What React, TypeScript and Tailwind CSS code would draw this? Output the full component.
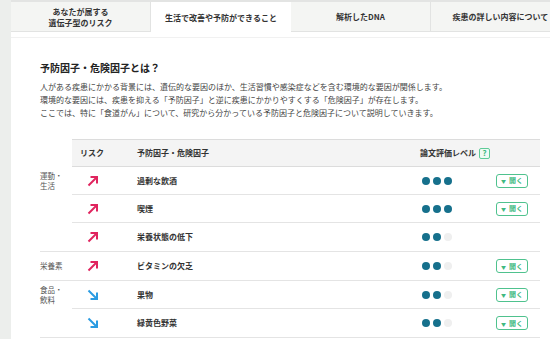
import React from 'react';

type Row = { risk: 'up' | 'down'; name: string; level: number; open: boolean };
type Group = { label: string[]; rows: Row[] };

const tabs = [
  { label: ['あなたが属する', '遺伝子型のリスク'], active: false },
  { label: ['生活で改善や予防ができること'], active: true },
  { label: ['解析したDNA'], active: false },
  { label: ['疾患の詳しい内容について'], active: false },
];

const groups: Group[] = [
  {
    label: ['運動・', '生活'],
    rows: [
      { risk: 'up', name: '過剰な飲酒', level: 3, open: true },
      { risk: 'up', name: '喫煙', level: 3, open: true },
      { risk: 'up', name: '栄養状態の低下', level: 2, open: false },
    ],
  },
  { label: ['栄養素'], rows: [{ risk: 'up', name: 'ビタミンの欠乏', level: 2, open: true }] },
  {
    label: ['食品・', '飲料'],
    rows: [
      { risk: 'down', name: '果物', level: 2, open: true },
      { risk: 'down', name: '緑黄色野菜', level: 2, open: true },
    ],
  },
];

const RiskArrow = ({ dir }: { dir: 'up' | 'down' }) =>
  dir === 'up' ? (
    <svg width="12" height="12" viewBox="0 0 12 12">
      <path d="M1.5 10.5 L10 2" stroke="#e0245e" strokeWidth="2" fill="none" />
      <path d="M3.5 2 H10 V8.5" stroke="#e0245e" strokeWidth="2" fill="none" />
    </svg>
  ) : (
    <svg width="12" height="12" viewBox="0 0 12 12">
      <path d="M1.5 1.5 L10 10" stroke="#2a9be2" strokeWidth="2" fill="none" />
      <path d="M10 3.5 V10 H3.5" stroke="#2a9be2" strokeWidth="2" fill="none" />
    </svg>
  );

const Dots = ({ level }: { level: number }) => (
  <div className="flex gap-[3px]">
    {[0, 1, 2].map((i) => (
      <span
        key={i}
        className={`w-[8px] h-[8px] rounded-full ${i < level ? 'bg-[#16708c]' : 'bg-[#efefef]'}`}
      ></span>
    ))}
  </div>
);

const FactorRow = ({ row, last }: { row: Row; last: boolean }) => (
  <div className={`flex items-center h-[28px] ${last ? '' : 'border-b border-[#e4e4e4]'}`}>
    <div className="w-[65px] pl-[15px] flex items-center">
      <RiskArrow dir={row.risk} />
    </div>
    <div className="flex-1 text-[8px] font-bold text-[#333]">{row.name}</div>
    <div className="w-[76px] pl-[2px]">
      <Dots level={row.level} />
    </div>
    <div className="w-[44px]">
      {row.open && (
        <button className="w-[32px] h-[14px] border border-[#4fc28e] rounded-[3px] flex items-center justify-center gap-[3px] text-[#3fb981] bg-white">
          <span className="text-[5px] leading-none">▼</span>
          <span className="text-[7px] font-bold leading-none">開く</span>
        </button>
      )}
    </div>
  </div>
);

export default function App() {
  return (
    <div
      className="w-[550px] h-[339px] overflow-hidden flex bg-white"
      style={{ fontFamily: '"Noto Sans CJK JP", "Noto Sans", sans-serif' }}
    >
      <div className="w-[11px] shrink-0 bg-[#eceeec]"></div>
      <div className="flex-1 min-w-0">
        <div className="border-t-2 border-[#e3e4e3]">
          <div className="flex h-[30px] overflow-hidden">
            {tabs.map((t, i) => (
              <div
                key={i}
                className={`w-[140px] shrink-0 flex flex-col items-center justify-center text-[8px] font-bold leading-[11px] text-[#333] ${
                  t.active
                    ? 'bg-white border-t-2 border-[#45c98f] -mt-[2px] h-[32px]'
                    : 'bg-[#f4f5f3] border-b border-r border-[#e2e3e2]'
                }`}
              >
                {t.label.map((l) => (
                  <span key={l}>{l}</span>
                ))}
              </div>
            ))}
          </div>
        </div>
        <div className="mt-[5px] border-t border-[#f1f1f1] pl-[29px] pr-[10px]">
          <h2 className="mt-[23px] text-[10px] font-bold text-[#222] leading-[13px]">予防因子・危険因子とは？</h2>
          <div className="mt-[6px] text-[8px] leading-[13px] text-[#444]">
            <p>人がある疾患にかかる背景には、遺伝的な要因のほか、生活習慣や感染症などを含む環境的な要因が関係します。</p>
            <p>環境的な要因には、疾患を抑える「予防因子」と逆に疾患にかかりやすくする「危険因子」が存在します。</p>
            <p>ここでは、特に「食道がん」について、研究から分かっている予防因子と危険因子について説明していきます。</p>
          </div>

          <div className="mt-[20px]">
            <div className="flex">
              <div className="w-[32px]"></div>
              <div className="flex-1 flex items-center h-[28px] bg-[#f4f4f4] border-t border-b border-[#dcdcdc] text-[8px] font-bold text-[#333]">
                <div className="w-[65px] pl-[8px]">リスク</div>
                <div className="flex-1">予防因子・危険因子</div>
                <div className="w-[120px] flex items-center gap-[3px]">
                  論文評価レベル
                  <span className="w-[11px] h-[11px] border border-[#5dcb97] rounded-[2px] bg-[#effaf4] text-[#3fb981] text-[8px] leading-none flex items-center justify-center">
                    ?
                  </span>
                </div>
              </div>
            </div>
            {groups.map((g, gi) => (
              <div key={gi} className="flex border-b border-[#e4e4e4]">
                <div className="w-[32px] h-[28px] flex flex-col justify-center text-[7.5px] leading-[10px] text-[#555]">
                  {g.label.map((l) => (
                    <div key={l}>{l}</div>
                  ))}
                </div>
                <div className="flex-1">
                  {g.rows.map((r, ri) => (
                    <FactorRow key={r.name} row={r} last={ri === g.rows.length - 1} />
                  ))}
                </div>
              </div>
            ))}
          </div>
        </div>
      </div>
    </div>
  );
}
